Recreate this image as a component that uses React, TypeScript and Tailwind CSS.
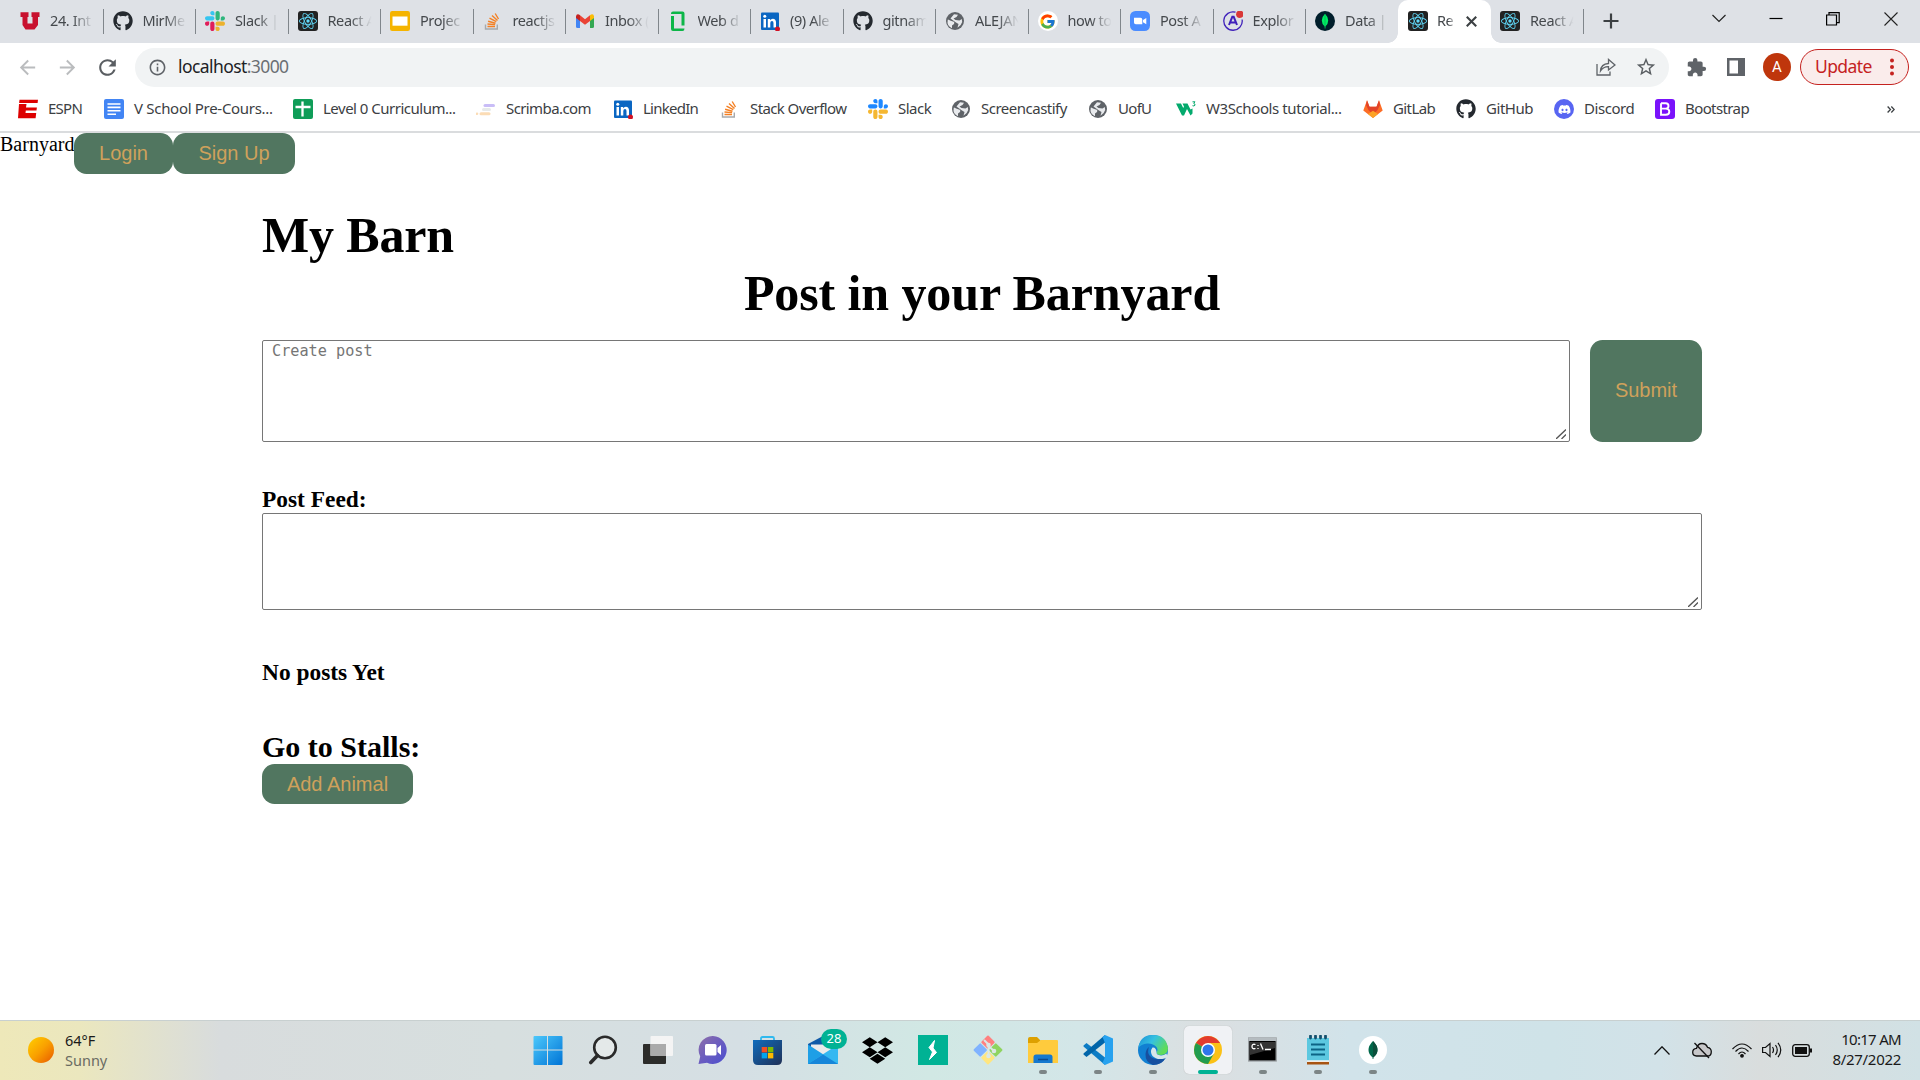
import React from "react";
import type { ReactNode } from "react";
import { FaGithub, FaDropbox, FaDiscord } from "react-icons/fa";
import { SiReact } from "react-icons/si";
import { FcGoogle } from "react-icons/fc";
import { MdExtension, MdArrowBack, MdArrowForward, MdRefresh, MdInfoOutline, MdStarBorder } from "react-icons/md";

/* ---------- Favicons (20px) ---------- */

const ReactIcon = () => (
  <span className="flex size-5 items-center justify-center rounded-[3px] bg-[#222222]">
    <SiReact className="size-[18px] text-[#61dafb]" />
  </span>
);

const GitHubIcon = () => <FaGithub className="size-5 text-[#24292f]" />;
const GlobeIcon = () => (
  <svg viewBox="0 0 20 20" className="size-5">
    <circle cx="10" cy="10" r="9" fill="#5f6368" />
    <path d="M3 8.500Q6 10 8 10.500Q10 11 9 13L7 14.500V17.300A7.500 7.500 0 0 1 2.700 9ZM9 3.200L13 3.800L11.500 6L8.500 7.500L10.500 9L14.500 9.500L16.800 8L17.200 11Q16 15 12.500 16.700L13.500 13L11 11.500L7.500 9L5.500 7.500Z" fill="#e8eaed" />
  </svg>
);

const Slack = ({ mono = false }: { mono?: boolean }) => {
  const a = mono ? "#1e88ff" : "#36c5f0";
  const b = mono ? "#1e88ff" : "#2eb67d";
  const c = mono ? "#f5b731" : "#e01e5a";
  const d = mono ? "#f5b731" : "#ecb22e";
  return (
    <svg viewBox="0 0 122.800 122.800" className="size-5">
      <path fill={c} d="M25.800 77.600c0 7.100-5.800 12.900-12.900 12.900S0 84.700 0 77.600s5.800-12.900 12.900-12.900h12.900v12.900zM32.300 77.600c0-7.100 5.800-12.900 12.900-12.900s12.900 5.800 12.900 12.900v32.300c0 7.100-5.800 12.900-12.900 12.900s-12.900-5.800-12.900-12.900V77.600z" />
      <path fill={a} d="M45.200 25.800c-7.100 0-12.900-5.800-12.900-12.900S38.100 0 45.200 0s12.900 5.800 12.900 12.900v12.900H45.200zM45.200 32.300c7.100 0 12.900 5.800 12.900 12.900s-5.800 12.900-12.900 12.900H12.900C5.800 58.100 0 52.300 0 45.200s5.800-12.900 12.900-12.900h32.300z" />
      <path fill={b} d="M97 45.200c0-7.100 5.800-12.900 12.900-12.900s12.900 5.800 12.900 12.900-5.800 12.900-12.900 12.900H97V45.200zM90.500 45.200c0 7.100-5.800 12.900-12.900 12.900s-12.900-5.800-12.900-12.900V12.900C64.700 5.800 70.500 0 77.600 0s12.900 5.800 12.900 12.900v32.300z" />
      <path fill={d} d="M77.600 97c7.100 0 12.900 5.800 12.900 12.900s-5.800 12.900-12.900 12.900-12.900-5.800-12.900-12.900V97h12.900zM77.600 90.500c-7.100 0-12.900-5.800-12.900-12.900s5.800-12.900 12.900-12.900h32.300c7.100 0 12.900 5.800 12.900 12.900s-5.800 12.900-12.900 12.900H77.600z" />
    </svg>
  );
};

const UtahIcon = () => (
  <svg viewBox="0 0 20 20" className="size-5">
    <path d="M.5 1.200H8.500V6H7.500V12.500H12.500V6H11.500V1.200H19.500V6H18V14L14.500 18.500H5.500L2.500 14V6H.5Z" fill="#c8102e" />
  </svg>
);

const SlidesIcon = () => (
  <svg viewBox="0 0 20 20" className="size-5">
    <rect width="20" height="20" rx="2.200" fill="#f5b400" />
    <rect x="2.500" y="5.500" width="15" height="9.200" fill="#fff" />
  </svg>
);

const StackIcon = () => (
  <svg viewBox="0 0 20 20" className="size-5" fill="none">
    <path d="M2.500 13.500V18H14.300V13.500" stroke="#a7a9ac" strokeWidth="1.400" />
    <path d="M4.500 15.500H12M4.500 13L12.100 13.600M5.100 10.200L12.500 12.200M6.500 7.200L13.300 10.700M9 4.500L14.500 9.500M12.200 2.500L15.500 8" stroke="#f48024" strokeWidth="1.400" />
  </svg>
);

const GmailIcon = () => (
  <svg viewBox="0 0 20 20" className="size-5">
    <path d="M1 5V15.500Q1 17 2.500 17H5V8Z" fill="#4285f4" />
    <path d="M15 8V17H17.500Q19 17 19 15.500V5Z" fill="#34a853" />
    <path d="M1 5.200Q1.500 2.500 4 3.500L5 4.300V10L1 7Z" fill="#c5221f" />
    <path d="M5 4.300L10 8.200L15 4.300V10L10 13.800L5 10Z" fill="#ea4335" />
    <path d="M15 4.300L16 3.500Q18.700 2.500 19 5.200V7L15 10Z" fill="#fbbc04" />
  </svg>
);

const GlassdoorIcon = () => (
  <svg viewBox="0 0 20 20" className="size-5" fill="#0db648">
    <path d="M3 2.500Q3 .5 5 .5H14.500Q16.500 .5 16.500 2.500V14.500H13.500V3H3Z" />
    <path d="M3 5H6V17.500H16.500Q16.500 20 14.500 20H5Q3 20 3 18Z" />
  </svg>
);

const LinkedInIcon = () => (
  <svg viewBox="0 0 20 20" className="size-5">
    <rect x="1" y="1.500" width="18" height="17.500" rx="1" fill="#0a66c2" />
    <path d="M3.500 8H6V16.500H3.500ZM7.800 8H10.100V9.200Q11 7.700 12.800 7.700Q16 7.700 16 11.500V16.500H13.500V12Q13.500 9.900 12 9.900Q10.300 9.900 10.300 12V16.500H7.800Z" fill="#fff" />
    <circle cx="4.750" cy="5.300" r="1.500" fill="#fff" />
    <circle cx="17.500" cy="18" r="2.500" fill="#d11124" />
  </svg>
);

const GoogleIcon = () => (
  <span className="flex size-5 items-center justify-center rounded-full bg-white">
    <FcGoogle className="size-[17px]" />
  </span>
);

const ZoomIcon = () => (
  <svg viewBox="0 0 20 20" className="size-5">
    <rect width="20" height="20" rx="5.500" fill="#4a8cff" />
    <path d="M4 6.800H10.500Q12.300 6.800 12.300 8.500V13.300H5.800Q4 13.300 4 11.500ZM13 9L16.300 6.900V13.200L13 11.200Z" fill="#fff" />
  </svg>
);

const ApolloIcon = () => (
  <svg viewBox="0 0 20 20" className="size-5" fill="none">
    <path d="M19.100 8.500A9.200 9.200 0 1 1 12.500 1.200" stroke="#3f20ba" strokeWidth="1.300" />
    <path d="M6 14L9.300 5.800H10.700L14 14M7.800 11.500H12.500" stroke="#3f20ba" strokeWidth="2" />
    <circle cx="16.800" cy="3.300" r="3.700" fill="#d93838" />
  </svg>
);

const MongoIcon = () => (
  <svg viewBox="0 0 20 20" className="size-5">
    <circle cx="10" cy="10" r="10" fill="#001e2b" />
    <path d="M10 2.800Q13.200 6 13.200 9.500Q13.200 13 10.400 15.500V17.500H9.700V15.500Q6.800 13 6.800 9.500Q6.800 6 10 2.800Z" fill="#00ed64" />
    <path d="M10 4V16" stroke="#00a34a" strokeWidth=".6" />
  </svg>
);

const EspnIcon = () => (
  <svg viewBox="0 0 20 20" className="size-5" fill="#d00">
    <path d="M1.500 .8H20L19.600 4H1.100ZM1 5H8.500L8 8.500H18.900L18.500 11.500H7.800L7.500 14H18.200L17.600 19.200H0Z" />
  </svg>
);

const DocsIcon = () => (
  <svg viewBox="0 0 20 20" className="size-5">
    <rect width="20" height="20" rx="2" fill="#4285f4" />
    <path d="M3.500 5H16.500M3.500 8.400H16.500M3.500 11.800H16.500M3.500 15.200H12" stroke="#fff" strokeWidth="1.600" />
  </svg>
);

const SheetIcon = () => (
  <svg viewBox="0 0 20 20" className="size-5">
    <rect width="20" height="20" rx="2" fill="#0f9d58" />
    <path d="M2.500 8H17.500M9.500 2.500V17.500" stroke="#fff" strokeWidth="2.300" />
  </svg>
);

const ScrimbaIcon = () => (
  <svg viewBox="0 0 20 20" className="size-5" strokeWidth="3" strokeLinecap="round">
    <path d="M9 6.500H17.500" stroke="#c9bdf7" />
    <path d="M7.500 10.500H13.500" stroke="#e6eaea" />
    <path d="M5 14.700H13" stroke="#fbdcb5" />
    <circle cx="1" cy="14.700" r="1.300" fill="#fbdcb5" />
  </svg>
);

const W3Icon = () => (
  <svg viewBox="0 0 20 20" className="size-5">
    <path d="M0 4.500H5L7.200 9L8 7.500L6.500 4.500H11.500L14.500 10.500L16.500 9.500V14.500L14.500 16.500L11 10L8 16.500H6Z" fill="#04aa6d" />
    <path d="M16.500 2.800H19L17.700 4.400Q19.300 4.700 19 6.200Q18.200 7.500 16.500 6.700" fill="none" stroke="#04aa6d" strokeWidth="1" />
  </svg>
);

const GitLabIcon = () => (
  <svg viewBox="0 0 20 20" className="size-5">
    <path d="M10 19L.3 11.500L4 1.200L6.500 7.700H13.500L16 1.200L19.700 11.500Z" fill="#fc6d26" />
    <path d="M10 16L5.500 11L3 6L4 1.200L6.500 7.700H13.500L16 1.200L17 6L14.500 11Z" fill="#e24329" />
    <path d="M10 19L5 15L10 11.800L15 15Z" fill="#fca326" />
  </svg>
);

const DiscordIcon = () => (
  <span className="flex size-5 items-center justify-center rounded-full bg-[#5865f2]">
    <FaDiscord className="size-[13px] text-white" />
  </span>
);

const BootstrapIcon = () => (
  <span className="flex size-5 items-center justify-center rounded-[3px] bg-[#7a12fb]">
    <svg viewBox="0 0 20 20" className="size-5" fill="none" stroke="#fff" strokeWidth="1.900">
      <path d="M6 4.300H10.700Q13.500 4.300 13.500 7Q13.500 9.600 10.700 9.600H6M10.700 9.600Q14.300 9.600 14.300 12.700Q14.300 15.700 10.700 15.700H6V4.300" />
    </svg>
  </span>
);

/* ---------- Tab strip ---------- */

const tabs: { icon: ReactNode; label: string }[] = [
  { icon: <UtahIcon />, label: "24. Int" },
  { icon: <GitHubIcon />, label: "MirMe" },
  { icon: <Slack />, label: "Slack |" },
  { icon: <ReactIcon />, label: "React A" },
  { icon: <SlidesIcon />, label: "Projec" },
  { icon: <StackIcon />, label: "reactjs" },
  { icon: <GmailIcon />, label: "Inbox (" },
  { icon: <GlassdoorIcon />, label: "Web d" },
  { icon: <LinkedInIcon />, label: "(9) Ale" },
  { icon: <GitHubIcon />, label: "gitnam" },
  { icon: <GlobeIcon />, label: "ALEJAN" },
  { icon: <GoogleIcon />, label: "how to" },
  { icon: <ZoomIcon />, label: "Post A" },
  { icon: <ApolloIcon />, label: "Explor" },
  { icon: <MongoIcon />, label: "Data |" },
];

const TabBody = ({ icon, label }: { icon: ReactNode; label: string }) => (
  <>
    <span className="shrink-0">{icon}</span>
    <span className="ml-[10px] w-[45px] overflow-hidden pb-[1px] text-[14.5px] tracking-[-0.4px] whitespace-nowrap text-[#45494d] [mask-image:linear-gradient(to_right,black_50%,transparent_97%)]">
      {label}
    </span>
  </>
);

const TabStrip = () => (
  <div className="flex h-[43px] bg-[#dee1e6]">
    <div className="flex w-[1398px] pl-[11px]">
      {tabs.map((t, i) => (
        <div key={i} className="flex h-[42px] w-[92.5px] shrink-0 items-center pl-[9px]">
          <TabBody icon={t.icon} label={t.label} />
          {i < tabs.length - 1 && <span className="ml-auto h-[25px] w-px bg-[#80868b]" />}
        </div>
      ))}
    </div>
    <div className="relative flex h-[43px] w-[93px] items-center rounded-t-[10px] bg-white pb-px pl-[10px]">
      <span className="absolute bottom-0 -left-[10px] size-[10px] bg-[radial-gradient(circle_at_0_0,transparent_9.5px,white_10px)]" />
      <span className="absolute -right-[10px] bottom-0 size-[10px] bg-[radial-gradient(circle_at_100%_0,transparent_9.5px,white_10px)]" />
      <ReactIcon />
      <span className="ml-[9px] w-[19px] overflow-hidden pb-[1px] text-[14.5px] tracking-[-0.4px] whitespace-nowrap text-[#45494d] [mask-image:linear-gradient(to_right,black_60%,transparent)]">Re</span>
      <svg viewBox="0 0 10 10" className="ml-[10px] size-[11px]" stroke="#3c4043" strokeWidth="1.900">
        <path d="M.7.7L9.300 9.300M9.300.7L.7 9.300" />
      </svg>
    </div>
    <div className="flex h-[42px] w-[93px] items-center pl-[9px]">
      <TabBody icon={<ReactIcon />} label="React A" />
      <span className="ml-auto h-[25px] w-px bg-[#80868b]" />
    </div>
    <svg viewBox="0 0 16 16" className="mt-[13px] ml-[19px] size-4" stroke="#3c4043" strokeWidth="2.200">
      <path d="M8 .5V15.500M.5 8H15.500" />
    </svg>
    <svg viewBox="0 0 14 14" className="mt-[11px] ml-[93px] size-[14px]" fill="none" stroke="#222" strokeWidth="1.200">
      <path d="M.5 4L7 10.500L13.500 4" />
    </svg>
    <svg viewBox="0 0 14 14" className="mt-[12px] ml-[43px] size-[14px]" stroke="#000" strokeWidth="1.200">
      <path d="M.5 6.500H13.500" />
    </svg>
    <svg viewBox="0 0 14 14" className="mt-[12px] ml-[43px] size-[14px]" fill="none" stroke="#000" strokeWidth="1.200">
      <path d="M.6 3H10.500V13H.6ZM3 3V.6H13.200V10.700H10.700" />
    </svg>
    <svg viewBox="0 0 14 14" className="mt-[12px] ml-[44px] size-[14px]" stroke="#222" strokeWidth="1.100">
      <path d="M.5.5L13.500 13.500M13.500.5L.5 13.500" />
    </svg>
  </div>
);

/* ---------- Toolbar ---------- */

const Toolbar = () => (
  <div className="flex h-[44px] items-center bg-white pt-[4px]">
    <MdArrowBack className="ml-[16px] size-[23px] text-[#babcbe]" />
    <MdArrowForward className="ml-[17px] size-[23px] text-[#babcbe]" />
    <MdRefresh className="ml-[16px] size-[25px] text-[#5a5e62]" />
    <div className="ml-[15px] flex h-[39px] w-[1534px] items-center rounded-full bg-[#f1f3f4] pr-[12px] pl-[13px]">
      <MdInfoOutline className="size-[19px] text-[#5f6368]" />
      <span className="ml-[11px] pb-[2px] text-[17.5px] tracking-[-0.58px] text-[#202124]">
        localhost<span className="text-[#6b6f73]">:3000</span>
      </span>
      <svg viewBox="0 0 20 18" className="mr-[19px] ml-auto h-[18px] w-5" fill="none" stroke="#5f6368" strokeWidth="1.300">
        <path d="M1 6V17H14V13.500M4.500 13Q5 6 12.500 5.500V1.500L19 7L12.500 12V8.700Q7.500 8.500 4.500 13Z" />
      </svg>
      <MdStarBorder className="size-[22px] text-[#5a5e62]" />
    </div>
    <MdExtension className="ml-[17px] size-[21px] text-[#5f6368]" />
    <svg viewBox="0 0 18 18" className="ml-[20px] size-[18px]">
      <path d="M0 0H18V18H0ZM2.500 2.500V15.500H11V2.500Z" fill="#5f6368" fillRule="evenodd" />
    </svg>
    <span className="ml-[18px] flex size-[28px] items-center justify-center rounded-full bg-[#bf360c] font-[Roboto] text-[15px] text-white">A</span>
    <div className="ml-[9px] flex h-[36px] w-[109px] items-center rounded-full border-[1.5px] border-[#c5221f] bg-[#faeceb] pl-[14px]">
      <span className="w-[57px] pb-px text-[17.5px] tracking-[-0.6px] text-[#c5221f]">Update</span>
      <svg viewBox="0 0 4 18" className="ml-[18px] h-[18px] w-1 shrink-0" fill="#c5221f">
        <circle cx="2" cy="2.500" r="2" />
        <circle cx="2" cy="9" r="2" />
        <circle cx="2" cy="15.500" r="2" />
      </svg>
    </div>
  </div>
);

/* ---------- Bookmarks ---------- */

const bookmarks: { icon: ReactNode; label: string; box: string; text: string }[] = [
  { icon: <EspnIcon />, label: "ESPN", box: "w-[86px]", text: "tracking-[-0.75px]" },
  { icon: <DocsIcon />, label: "V School Pre-Cours...", box: "w-[189px]", text: "tracking-[-0.3px]" },
  { icon: <SheetIcon />, label: "Level 0 Curriculum...", box: "w-[183px]", text: "tracking-[-0.5px]" },
  { icon: <ScrimbaIcon />, label: "Scrimba.com", box: "w-[137px]", text: "tracking-[-0.6px]" },
  { icon: <LinkedInIcon />, label: "LinkedIn", box: "w-[107px]", text: "tracking-[-0.75px]" },
  { icon: <StackIcon />, label: "Stack Overflow", box: "w-[148px]", text: "tracking-[-0.6px]" },
  { icon: <Slack mono />, label: "Slack", box: "w-[83px]", text: "tracking-[-0.5px]" },
  { icon: <GlobeIcon />, label: "Screencastify", box: "w-[137px]", text: "tracking-[-0.5px]" },
  { icon: <GlobeIcon />, label: "UofU", box: "w-[88px]", text: "tracking-[-0.7px]" },
  { icon: <W3Icon />, label: "W3Schools tutorial...", box: "w-[187px]", text: "tracking-[-0.4px]" },
  { icon: <GitLabIcon />, label: "GitLab", box: "w-[93px]", text: "tracking-[-0.6px]" },
  { icon: <GitHubIcon />, label: "GitHub", box: "w-[98px]", text: "tracking-[-0.45px]" },
  { icon: <DiscordIcon />, label: "Discord", box: "w-[101px]", text: "tracking-[-0.45px]" },
  { icon: <BootstrapIcon />, label: "Bootstrap", box: "w-[110px]", text: "tracking-[-0.6px]" },
];

const Bookmarks = () => (
  <div className="flex h-[46px] items-center border-b-2 border-[#dadcde] bg-white pl-[18px]">
    {bookmarks.map((b) => (
      <div key={b.label} className={"flex shrink-0 items-center gap-[10px] " + b.box}>
        <span className="shrink-0">{b.icon}</span>
        <span className={"pb-[2px] text-[15px] leading-5 whitespace-nowrap text-[#3c4043] " + b.text}>{b.label}</span>
      </div>
    ))}
    <svg viewBox="0 0 8 7" className="mr-[25px] ml-auto h-[7px] w-2" fill="none" stroke="#3c4043" strokeWidth="1.300">
      <path d="M.6.5L3.500 3.500L.6 6.500M4.300.5L7.200 3.500L4.300 6.500" />
    </svg>
  </div>
);

/* ---------- Page ---------- */

const Grip = () => (
  <svg viewBox="0 0 10 10" className="absolute right-[3px] bottom-[2px] size-[10px]" stroke="#555" strokeWidth="1.300">
    <path d="M0 10L10 .5M5.500 10L10 5.500" />
  </svg>
);

const btn = "flex items-center justify-center rounded-[12.5px] bg-[#517660] font-['Liberation_Sans',sans-serif] text-[20px] leading-[23px] text-[#cfa15b]";

const Page = () => (
  <div className="h-[887px] overflow-hidden bg-white font-['Liberation_Serif',serif] text-black">
    <div className="flex h-[41px] items-start">
      <span className="w-[74px] text-[20px] leading-[23px]">Barnyard</span>
      <button className={btn + " h-[41px] w-[99px]"}>Login</button>
      <button className={btn + " h-[41px] w-[122px]"}>Sign Up</button>
    </div>
    <div className="ml-[262px] w-[1440px] pt-[32px]">
      <h1 className="text-[50px] leading-[58px] font-bold tracking-[-0.15px]">My Barn</h1>
      <h1 className="text-center text-[50px] leading-[58px] font-bold tracking-[-0.1px]">Post in your Barnyard</h1>
      <div className="mt-[18px] flex h-[102px] gap-5">
        <div className="relative flex-1 rounded-[2px] border border-[#767676] px-[9px] font-['DejaVu_Sans_Mono',monospace] text-[15.2px] leading-[20px] text-[#757575]">
          Create post
          <Grip />
        </div>
        <button className={btn + " w-[112px] pb-[2px]"}>Submit</button>
      </div>
      <h3 className="mt-[44px] text-[23.4px] leading-[27px] font-bold">Post Feed:</h3>
      <div className="relative h-[97px] rounded-[2px] border border-[#767676]">
        <Grip />
      </div>
      <h3 className="mt-[49px] text-[23.4px] leading-[27px] font-bold">No posts Yet</h3>
      <h2 className="mt-[44px] text-[30px] leading-[34px] font-bold">Go to Stalls:</h2>
      <button className={btn + " h-[40px] w-[151px]"}>Add Animal</button>
    </div>
  </div>
);

/* ---------- Taskbar ---------- */

const Svg = ({ children }: { children: ReactNode }) => (
  <svg viewBox="0 0 30 30" className="size-[30px]">{children}</svg>
);

const dock: { icon: ReactNode; state?: "open" | "active"; badge?: string }[] = [
  {
    icon: (
      <Svg>
        <linearGradient id="win" x1="0" y1="0" x2="1" y2="1" gradientUnits="objectBoundingBox"><stop stopColor="#4cc8fb" /><stop offset="1" stopColor="#0074d6" /></linearGradient>
        <path d="M1.500 1H14V14.500H.5V2Q.5 1 1.500 1ZM15 1H28.500Q29.500 1 29.500 2V14.500H15ZM.5 15.500H14V30H1.500Q.5 30 .5 29ZM15 15.500H29.500V29Q29.500 30 28.500 30H15Z" fill="url(#win)" />
      </Svg>
    ),
  },
  {
    icon: (
      <Svg>
        <circle cx="17" cy="12.500" r="10.800" fill="#e4e9e9" stroke="#2a2a2a" strokeWidth="2.600" />
        <path d="M9.500 20.500L2.800 27.500" stroke="#2a2a2a" strokeWidth="3.600" strokeLinecap="round" />
      </Svg>
    ),
  },
  {
    icon: (
      <Svg>
        <rect x="0" y="9" width="23" height="20" rx="1" fill="#2c2c2a" />
        <rect x="7.500" y="1" width="22.500" height="20" rx="1" fill="#f4f4f4" />
        <rect x="7.500" y="9" width="15.500" height="12" fill="#aaa" />
      </Svg>
    ),
  },
  {
    icon: (
      <Svg>
        <linearGradient id="chat" x1="0" y1="0" x2="1" y2="1"><stop stopColor="#8f70a8" /><stop offset=".5" stopColor="#6a5cc0" /><stop offset="1" stopColor="#4a4ed0" /></linearGradient>
        <path d="M15 1A14 14 0 1 1 9 27.800L.5 29L2.200 21.500A14 14 0 0 1 15 1Z" fill="url(#chat)" />
        <rect x="7" y="9" width="11.500" height="11.500" rx="1.500" fill="#fff" />
        <path d="M19.500 13L23 10V20L19.500 17Z" fill="#fff" />
      </Svg>
    ),
  },
  {
    icon: (
      <Svg>
        <linearGradient id="store" x1="0" y1="0" x2="1" y2="1"><stop stopColor="#0f6cbd" /><stop offset="1" stopColor="#1f3056" /></linearGradient>
        <path d="M8 6V3.500Q8 2 9.500 2H19.500Q21 2 21 3.500V6" fill="none" stroke="#2fb9ee" strokeWidth="1.800" />
        <path d="M0 5H29V25Q29 30 24 30H5Q0 30 0 25Z" fill="url(#store)" />
        <rect x="8.700" y="12" width="5.400" height="5.400" fill="#f25022" /><rect x="14.900" y="12" width="5.400" height="5.400" fill="#7fba00" />
        <rect x="8.700" y="18" width="5.400" height="5.400" fill="#00a4ef" /><rect x="14.900" y="18" width="5.400" height="5.400" fill="#ffb900" />
      </Svg>
    ),
  },
  {
    badge: "28",
    icon: (
      <Svg>
        <path d="M0 9L15 1L30 9V20H0Z" fill="#0f5aa8" />
        <path d="M3 9.500H27V20H3Z" fill="#ebebeb" />
        <path d="M0 9.500L30 29H0Z" fill="#1e9fe6" />
        <path d="M30 9.500V29H26L0 29Z" fill="#35b8f1" />
        <path d="M0 29L15 19.500L30 29Z" fill="#1686d9" />
      </Svg>
    ),
  },
  { icon: <FaDropbox className="size-[31px] text-black" /> },
  {
    icon: (
      <Svg>
        <rect width="30" height="30" fill="#00b294" />
        <path d="M16.500 5.500L11 12.500L14.500 17L11.500 24.500L18.500 17.500L15 13Z" fill="#fff" stroke="#fff" />
      </Svg>
    ),
  },
  {
    icon: (
      <Svg>
        <g transform="rotate(45 15 15)">
          <rect x="4.500" y="4.500" width="10" height="10" rx="1" fill="#ff8080" /><rect x="15.500" y="4.500" width="10" height="10" rx="1" fill="#8fd460" />
          <rect x="4.500" y="15.500" width="10" height="10" rx="1" fill="#80b3ff" /><rect x="15.500" y="15.500" width="10" height="10" rx="1" fill="#ffe680" />
        </g>
        <path d="M11 5L15.500 9.500V21M15.500 11L21 16" stroke="#dbe8e6" strokeWidth="2" fill="none" />
        <circle cx="15.500" cy="10" r="2.300" fill="#dbe8e6" /><circle cx="21" cy="16" r="2.300" fill="#dbe8e6" /><circle cx="15.500" cy="21" r="2.300" fill="#dbe8e6" />
      </Svg>
    ),
  },
  {
    state: "open",
    icon: (
      <Svg>
        <path d="M0 4Q0 2 2 2H9L12.500 5.500V9H0Z" fill="#dda000" />
        <path d="M0 8H9L13 5H29Q30 5 30 6V28H0Z" fill="#ffcb3d" />
        <path d="M5.500 28V22Q5.500 19.500 8 19.500H22Q24.500 19.500 24.500 22V28Z" fill="#1579cf" />
        <path d="M10 24.500H20" stroke="#0b4b91" strokeWidth="1.500" />
      </Svg>
    ),
  },
  {
    state: "open",
    icon: (
      <Svg>
        <path d="M.5 10.500L3.500 8L22 22.500V30L.5 11.500Z" fill="#0c7cc5" />
        <path d="M.5 19.500L3.500 22L22 7.500V0L.5 18.500Z" fill="#0065a9" />
        <path d="M22 0L30 3.500V26.500L22 30L19.500 28L22 22V8L19.500 2Z" fill="#27a2ef" />
      </Svg>
    ),
  },
  {
    state: "open",
    icon: (
      <Svg>
        <linearGradient id="edgeTop" x1="0" y1="0" x2="1" y2=".5"><stop stopColor="#1b8fd8" /><stop offset=".5" stopColor="#35c1e0" /><stop offset="1" stopColor="#5fdc58" /></linearGradient>
        <circle cx="15" cy="15" r="15" fill="#1180d2" />
        <path d="M.3 13Q2 0 15 0Q28 0 30 13Q30 20 23 20Q18 20 18.500 17Q20.500 15 18.500 12Q15 8 9 8.500Q3 9 .3 13Z" fill="url(#edgeTop)" />
        <path d="M11 12Q9 17 11.500 20.500Q17 26.500 27.500 23Q24 30 15 30Q7 27 7.500 19Q8 14 11 12Z" fill="#1750a0" />
        <path d="M18.500 17Q18 20 23 20.500Q26 20.500 28.500 18.500L29.500 22L26.500 23.500Q19 25.500 14.500 21Q11.500 16.500 14.500 12.500Q18 12 18.500 17Z" fill="#d7e6ea" />
      </Svg>
    ),
  },
  {
    state: "active",
    icon: (
      <Svg>
        <circle cx="15" cy="15" r="14" fill="#fbc116" />
        <path d="M15 15L2.900 8A14 14 0 0 1 27.100 8H15Z" fill="#e33b2e" />
        <path d="M15 15L2.900 8A14 14 0 0 0 15 29L21 18.500Z" fill="#219c4f" />
        <circle cx="15" cy="15" r="7" fill="#fff" /><circle cx="15" cy="15" r="5.500" fill="#2f76ea" />
      </Svg>
    ),
  },
  {
    state: "open",
    icon: (
      <Svg>
        <rect x=".7" y="3" width="27.500" height="23" fill="#000" stroke="#9a9fa2" strokeWidth="1.300" />
        <rect x=".5" y="3" width="28" height="3" fill="#b5bcc0" />
        <path d="M2 7H27V13L2 20Z" fill="#343434" />
        <path d="M7.500 9.500Q4 8.500 4 11.500Q4 14.500 7.500 13.500M10 10V11M10 13V14M12.500 8.500L15 14.500M17 14.500H23" stroke="#fff" strokeWidth="1.300" fill="none" />
      </Svg>
    ),
  },
  {
    state: "open",
    icon: (
      <Svg>
        <path d="M4 3H26V25.500H4Z" fill="#5cc8e0" /><path d="M4 26.500H26V29.500H4Z" fill="#a75412" /><path d="M4 25.500H26V26.800H4Z" fill="#fff" />
        <path d="M8 9.500H22M8 14.500H22M8 19.500H22" stroke="#0c6485" strokeWidth="1.800" />
        <path d="M7.500 1V3M12.500 1V3M17.500 1V3M22.500 1V3" stroke="#14506e" strokeWidth="2.800" strokeLinecap="round" />
      </Svg>
    ),
  },
  {
    state: "open",
    icon: (
      <Svg>
        <circle cx="15" cy="15" r="14" fill="#fff" />
        <path d="M15 6Q19.500 10.500 19.500 15Q19.500 19 15.400 22.500V24H14.600V22.500Q10.500 19 10.500 15Q10.500 10.500 15 6Z" fill="#00684a" />
        <path d="M15 6Q19.500 10.500 19.500 15Q19.500 19 15 22.500Z" fill="#0b4f3b" />
      </Svg>
    ),
  },
];

const Dock = () => (
  <div className="flex">
    {dock.map((d, i) => (
      <div key={i} className="relative flex h-[60px] w-[55px] items-center justify-center">
        {d.state === "active" && <span className="absolute top-[6px] left-[4px] size-12 rounded-[5px] bg-[#f0f2f5] shadow-[0_0_1px_#aaa]" />}
        <span className="relative">{d.icon}</span>
        {d.state === "open" && <span className="absolute top-[50px] left-[24px] h-1 w-2 rounded-full bg-[#7c8586]" />}
        {d.state === "active" && <span className="absolute top-[50px] left-[18px] h-1 w-5 rounded-full bg-[#00b294]" />}
        {d.badge && <span className="absolute top-[9px] left-[26px] flex h-5 w-[26px] items-center justify-center rounded-full bg-[#00b294] text-[13px] text-white">{d.badge}</span>}
      </div>
    ))}
  </div>
);

const Taskbar = () => (
  <div className="flex h-[60px] bg-[linear-gradient(90deg,#eee8b9_0px,#ebe7be_80px,#d8dcdd_220px,#d7dfdf_500px,#d5dfe4_740px,#d1e8e4_930px,#d3e6e8_1080px,#dbdfe1_1210px,#d1e3ea_1350px,#cfe3e8_1550px,#d2e2e8_1660px,#d9dddd_1760px,#d1e1e5_1920px)] shadow-[inset_0_1px_0_#c8d0d0]">
    <div className="flex w-[520px] items-center">
      <span className="ml-[28px] size-[26px] rounded-full bg-linear-to-br from-[#ffd000] via-[#f9a000] to-[#e65400]" />
      <div className="ml-[11px] text-[14.5px] leading-5">
        <div className="text-[#1a1a1a]">64°F</div>
        <div className="text-[#6a6b62]">Sunny</div>
      </div>
    </div>
    <Dock />
    <div className="flex flex-1 items-center pl-[254px] text-black">
      <svg viewBox="0 0 16 9" className="h-[9px] w-4" fill="none" stroke="#111" strokeWidth="1.300"><path d="M.5 8.500L8 .8L15.500 8.500" /></svg>
      <svg viewBox="0 0 20 17" className="ml-[22px] h-[17px] w-5" fill="#c7c7c9" stroke="#111" strokeWidth="1.300">
        <path d="M4.500 14Q.7 14 .7 10.300Q.7 6.500 4.500 6.300Q6 1.500 10 1.500Q14 1.500 15.500 5.300Q19.300 6 19.300 9.700Q19.300 14 15.500 14Z" /><path d="M2.500 1L17 16" />
      </svg>
      <svg viewBox="0 0 20 15" className="ml-[20px] h-[15px] w-5" fill="none" stroke="#111" strokeWidth="1.200">
        <path d="M.5 6Q10-4 19.500 6M3.500 8.500Q10 1.500 16.500 8.500M6.500 11Q10 7 13.500 11" /><circle cx="10" cy="12.800" r="1.300" fill="#111" />
      </svg>
      <svg viewBox="0 0 20 16" className="ml-[10px] h-4 w-5" fill="none" stroke="#111" strokeWidth="1.200">
        <path d="M.6 5.500V10.500H3.500L8 14.500V1.500L3.500 5.500ZM10.500 5Q12.500 8 10.500 11M13.500 3Q17 8 13.500 13M16 .8Q21.500 8 16 15.200" />
      </svg>
      <svg viewBox="0 0 20 13" className="ml-[10px] h-[13px] w-5" fill="none" stroke="#111" strokeWidth="1.300">
        <rect x=".7" y=".7" width="16.600" height="11.600" rx="2.500" /><rect x="3" y="3" width="12" height="7" fill="#111" stroke="none" /><path d="M19 4.500V8.500" strokeWidth="2" />
      </svg>
      <div className="mr-[19px] ml-auto pb-[2px] text-right text-[15px] leading-5 text-[#1a1a1a]">
        <div className="tracking-[-0.7px]">10:17 AM</div>
        <div className="tracking-[-0.3px]">8/27/2022</div>
      </div>
    </div>
  </div>
);

export default function App() {
  return (
    <div className="flex h-[1080px] w-[1920px] flex-col overflow-hidden bg-white font-['Noto_Sans','Open_Sans',sans-serif]">
      <TabStrip />
      <Toolbar />
      <Bookmarks />
      <Page />
      <Taskbar />
    </div>
  );
}
